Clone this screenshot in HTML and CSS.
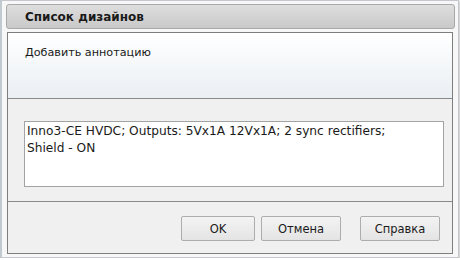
FILE: index.html
```html
<!DOCTYPE html>
<html lang="ru">
<head>
  <meta charset="UTF-8" />
  <title>Список дизайнов</title>
  <link rel="stylesheet" href="styles.css">
</head>
<body>
  <div class="window">
    <div class="titlebar">Список дизайнов</div>
    <div class="panel">
      <div class="head">Добавить аннотацию</div>
      <div class="content">
        <textarea class="note">Inno3-CE HVDC; Outputs: 5Vx1A 12Vx1A; 2 sync rectifiers;
Shield - ON</textarea>
      </div>
      <div class="foot">
        <button class="btn">OK</button>
        <button class="btn">Отмена</button>
        <button class="btn help">Справка</button>
      </div>
    </div>
  </div>
</body>
</html>
```

FILE: styles.css
```css
* {
  box-sizing: border-box;
}
body {
  margin: 0;
  font-family: 'DejaVu Sans', Verdana, sans-serif;
  font-size: 11px;
  color: #1a1a1a;
  background: #ffffff;
}
.window {
  width: 459px;
  height: 258px;
  background: #f7f7f7;
  border: 1px solid #c4c8cc;
  border-left: 2px solid #c2c9cf;
  box-shadow: 1px 1px 2px rgb(0 0 0 / 0.25);
  padding: 3px 3px 0 4px;
}
.titlebar {
  height: 25px;
  border: 1px solid #a9a9a9;
  border-radius: 3px;
  background: linear-gradient(#dedede, #c9c9c9);
  font-weight: bold;
  font-size: 12px;
  padding: 5px 0 0 18px;
}
.panel {
  margin: 3px 2px 0 1px;
  height: 222px;
  border: 1px solid #7e7e7e;
  display: flex;
  flex-direction: column;
}
.head {
  height: 66px;
  background: linear-gradient(#ffffff, #eaeff3);
  border-bottom: 1px solid #8a8a8a;
  padding: 13px 0 0 17px;
  font-size: 11.2px;
}
.content {
  height: 103px;
  background: #f0f0f0;
  border-bottom: 1px solid #8a8a8a;
  padding: 22px 0 0 16px;
}
.note {
  width: 420px;
  height: 66px;
  border: 1px solid #a3a3a3;
  background: #ffffff;
  font-family: inherit;
  font-size: 12.2px;
  color: #1a1a1a;
  padding: 1px 2px;
  resize: none;
  line-height: 17px;
}
.foot {
  flex: 1;
  background: #f0f0f0;
  display: flex;
  padding: 14px 0 0 173px;
  gap: 6px;
}
.btn {
  width: 74px;
  height: 25px;
  border: 1px solid #adadad;
  border-radius: 2px;
  background: linear-gradient(#f3f3f3, #e4e4e4);
  font-family: inherit;
  font-size: 11.5px;
  color: #1a1a1a;
  padding: 0;
}
.btn:nth-child(2) {
  width: 80px;
}
.help {
  width: 80px;
  margin-left: 13px;
}
```
